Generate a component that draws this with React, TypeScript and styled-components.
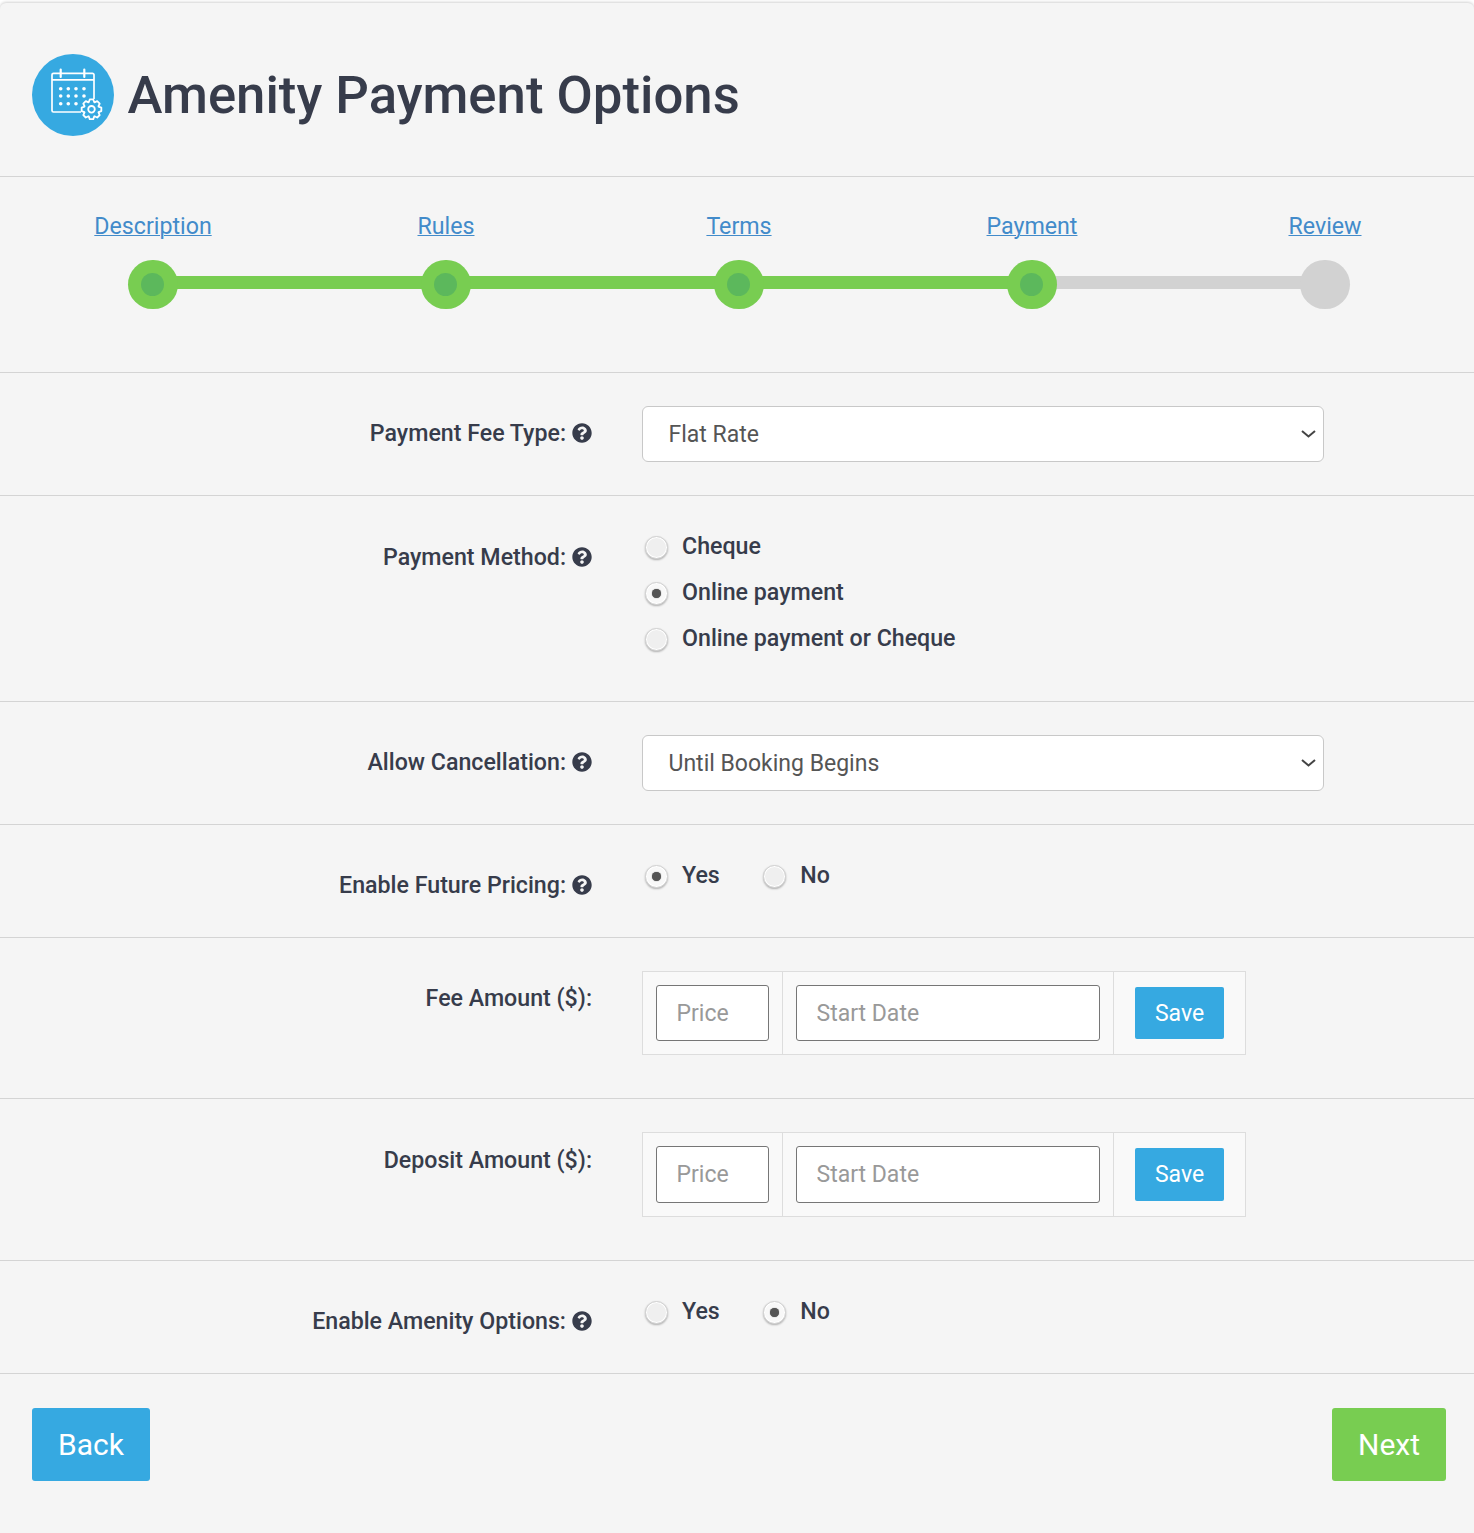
import React from 'react';
import styled, { createGlobalStyle } from 'styled-components';
import { FaQuestionCircle } from 'react-icons/fa';

const GlobalStyle = createGlobalStyle`
  html, body {
    margin: 0;
    padding: 0;
    background: #ffffff;
    font-family: Roboto, "Liberation Sans", sans-serif;
    color: #373c4b;
  }
`;

const Card = styled.div`
  margin-top: 3px;
  height: 1530px;
  box-sizing: border-box;
  background: #f5f5f5;
  border-radius: 6px 6px 0 0;
  box-shadow: 0 -1px 3px rgba(0, 0, 0, 0.18);
  overflow: hidden;
`;

const Header = styled.header`
  display: flex;
  align-items: center;
  gap: 13.5px;
  height: 174px;
  box-sizing: border-box;
  padding: 10px 32px 0;
  border-bottom: 1px solid #d4d4d4;
`;

const IconCircle = styled.div`
  width: 82px;
  height: 82px;
  border-radius: 50%;
  background: #36a9e1;
  flex-shrink: 0;
  svg {
    display: block;
  }
`;

const Title = styled.h1`
  margin: 0;
  font-size: 52.7px;
  font-weight: 500;
  color: #373c4b;
  white-space: nowrap;
`;

const Steps = styled.nav`
  height: 196px;
  box-sizing: border-box;
  padding-top: 34px;
  border-bottom: 1px solid #d4d4d4;
`;

const StepLabels = styled.div`
  display: grid;
  grid-template-columns: repeat(5, 293px);
  padding-left: 6.5px;
  margin-bottom: 18.75px;
`;

const StepCell = styled.div`
  text-align: center;
`;

const StepLink = styled.a`
  font-size: 23.2px;
  line-height: 30px;
  color: #428bca;
  text-decoration: underline;
  text-decoration-thickness: 1px;
`;

const Track = styled.div`
  display: flex;
  align-items: center;
  padding-left: 130px;
`;

const Node = styled.span<{ $done: boolean }>`
  width: 49.5px;
  height: 49.5px;
  border-radius: 50%;
  background: ${({ $done }) => ($done ? '#78cd51' : '#d2d2d2')};
  display: flex;
  align-items: center;
  justify-content: center;
  flex-shrink: 0;
  margin: 0 -2px;
  position: relative;
  &::after {
    content: '';
    display: ${({ $done }) => ($done ? 'block' : 'none')};
    width: 23px;
    height: 23px;
    border-radius: 50%;
    background: #5cb85c;
  }
`;

const Connector = styled.span<{ $done: boolean }>`
  width: 247.5px;
  height: 13px;
  margin-top: -4px;
  background: ${({ $done }) => ($done ? '#78cd51' : '#d2d2d2')};
  flex-shrink: 0;
`;

const Row = styled.section<{ $height: number; $last?: boolean }>`
  display: grid;
  grid-template-columns: 592px 1fr;
  column-gap: 50px;
  height: ${({ $height }) => $height}px;
  box-sizing: border-box;
  padding-top: 33px;
  border-bottom: ${({ $last }) => ($last ? 'none' : '1px solid #d4d4d4')};
`;

const Label = styled.label<{ $top: number }>`
  display: flex;
  justify-content: flex-end;
  align-items: center;
  gap: 6px;
  height: 24px;
  margin-top: ${({ $top }) => $top}px;
  font-size: 23.2px;
  font-weight: 500;
  color: #373c4b;
  white-space: nowrap;
  svg {
    width: 20px;
    height: 20px;
    flex-shrink: 0;
  }
`;

const SelectWrap = styled.div`
  position: relative;
  width: 682px;
  height: 56px;
  svg {
    position: absolute;
    top: 24px;
    right: 8px;
    pointer-events: none;
  }
`;

const Select = styled.select`
  display: block;
  width: 100%;
  height: 100%;
  box-sizing: border-box;
  padding: 0 25.5px;
  appearance: none;
  background: #ffffff;
  border: 1px solid #c8c8c8;
  border-radius: 6px;
  font-family: inherit;
  font-size: 23px;
  color: #555555;
`;

const RadioStack = styled.div`
  display: flex;
  flex-direction: column;
  gap: 16px;
  margin-top: 2px;
  padding-left: 3px;
`;

const RadioInline = styled.div`
  display: flex;
  gap: 43.5px;
  margin-top: 2px;
  padding-left: 3px;
`;

const RadioOption = styled.div`
  display: flex;
  align-items: center;
  gap: 14px;
  height: 30px;
  font-size: 23.2px;
  font-weight: 500;
  color: #373c4b;
  white-space: nowrap;
`;

const RadioDot = styled.span<{ $on: boolean }>`
  width: 23px;
  height: 23px;
  margin-top: 3px;
  box-sizing: border-box;
  border-radius: 50%;
  border: 1px solid #d2d2d2;
  background: ${({ $on }) => ($on ? '#f8f8f8' : '#efefef')};
  box-shadow: 0 1px 2px rgba(0, 0, 0, 0.28), inset 0 0 0 1px #fff;
  display: flex;
  align-items: center;
  justify-content: center;
  &::after {
    content: '';
    display: ${({ $on }) => ($on ? 'block' : 'none')};
    width: 9px;
    height: 9px;
    border-radius: 50%;
    background: #555555;
    box-shadow: 0 0 1px #555555;
  }
`;

const PriceGroup = styled.div<{ $height: number }>`
  display: flex;
  width: 604px;
  height: ${({ $height }) => $height}px;
  box-sizing: border-box;
  background: #f9f9f9;
  border: 1px solid #dddddd;
`;

const PriceCell = styled.div<{ $width: number }>`
  width: ${({ $width }) => $width}px;
  box-sizing: border-box;
  padding: 13px;
  display: flex;
  align-items: stretch;
  justify-content: center;
  flex-shrink: 0;
  & + & {
    border-left: 1px solid #dddddd;
  }
`;

const TextInput = styled.input`
  width: 100%;
  box-sizing: border-box;
  padding: 0 19.5px;
  background: #ffffff;
  border: 1px solid #767676;
  border-radius: 3px;
  font-family: inherit;
  font-size: 23px;
  &::placeholder {
    color: #999999;
    opacity: 1;
  }
`;

const SaveButton = styled.button`
  width: 89px;
  margin: 2px 0;
  border: none;
  border-radius: 2px;
  background: #36a9e1;
  color: #ffffff;
  font-family: inherit;
  font-size: 23px;
`;

const Footer = styled.footer`
  display: flex;
  justify-content: space-between;
  padding: 34px 28px 0 32px;
  border-top: 1px solid #d4d4d4;
`;

const NavButton = styled.button<{ $color: string; $width: number }>`
  width: ${({ $width }) => $width}px;
  height: 73px;
  border: none;
  border-radius: 3px;
  background: ${({ $color }) => $color};
  color: #ffffff;
  font-family: inherit;
  font-size: 30px;
`;

// eight rounded lobes round the centre, same look as the calendar's gear badge
const gearPath = (cx: number, cy: number, outer: number, inner: number) => {
  const teeth = 8;
  const pts: string[] = [];
  for (let i = 0; i < teeth; i++) {
    const a = (i / teeth) * Math.PI * 2 - Math.PI / 2;
    const w = Math.PI / teeth;
    [
      [a - w * 0.95, inner],
      [a - w * 0.45, outer],
      [a + w * 0.45, outer],
      [a + w * 0.95, inner],
    ].forEach(([ang, r]) => {
      pts.push(`${(cx + Math.cos(ang) * r).toFixed(2)} ${(cy + Math.sin(ang) * r).toFixed(2)}`);
    });
  }
  return `M${pts.join('L')}Z`;
};

const CalendarGearIcon = () => (
  <svg width="82" height="82" viewBox="0 0 82 82" fill="none" stroke="#fff" strokeWidth="1.7">
    <path d="M49 58H21.500A1.500 1.500 0 0 1 20 56.500V20.800a1.500 1.500 0 0 1 1.500-1.500h39a1.500 1.500 0 0 1 1.500 1.500V45" />
    <path d="M20 25.800h42" />
    <path d="M28.700 15.500v7.500M52.300 15.500v7.500" strokeWidth="2.200" strokeLinecap="round" />
    <g fill="#fff" stroke="none">
      {[34.700, 42, 49.700].map(y =>
        [28.700, 36.300, 44, 52].map(x =>
          y === 49.700 && x === 52 ? null : <circle key={`${x}-${y}`} cx={x} cy={y} r="1.800" />,
        ),
      )}
    </g>
    <path d={gearPath(59.500, 55.300, 10, 7.600)} strokeLinejoin="round" strokeWidth="1.800" />
    <circle cx="59.500" cy="55.300" r="3.300" strokeWidth="1.800" />
  </svg>
);

const ChevronIcon = () => (
  <svg width="15" height="8" viewBox="0 0 15 8" fill="none" stroke="#444" strokeWidth="2">
    <path d="M1 1l6.500 5.500L14 1" />
  </svg>
);

const HelpIcon = () => <FaQuestionCircle color="#373c4b" />;

const stepNames = ['Description', 'Rules', 'Terms', 'Payment', 'Review'];

interface RadioProps {
  label: string;
  on?: boolean;
}

const Radio: React.FC<RadioProps> = ({ label, on = false }) => (
  <RadioOption>
    <RadioDot $on={on} />
    {label}
  </RadioOption>
);

interface PriceRowProps {
  label: string;
  height: number;
  groupHeight: number;
  labelTop: number;
}

const PriceRow: React.FC<PriceRowProps> = ({ label, height, groupHeight, labelTop }) => (
  <Row $height={height}>
    <Label $top={labelTop}>{label}</Label>
    <PriceGroup $height={groupHeight}>
      <PriceCell $width={139}>
        <TextInput placeholder="Price" />
      </PriceCell>
      <PriceCell $width={331}>
        <TextInput placeholder="Start Date" />
      </PriceCell>
      <PriceCell $width={132}>
        <SaveButton>Save</SaveButton>
      </PriceCell>
    </PriceGroup>
  </Row>
);

const SelectField: React.FC<{ value: string }> = ({ value }) => (
  <SelectWrap>
    <Select defaultValue={value}>
      <option value={value}>{value}</option>
    </Select>
    <ChevronIcon />
  </SelectWrap>
);

export default function App() {
  return (
    <>
      <GlobalStyle />
      <Card>
        <Header>
          <IconCircle>
            <CalendarGearIcon />
          </IconCircle>
          <Title>Amenity Payment Options</Title>
        </Header>

        <Steps>
          <StepLabels>
            {stepNames.map(name => (
              <StepCell key={name}>
                <StepLink href="#">{name}</StepLink>
              </StepCell>
            ))}
          </StepLabels>
          <Track>
            {stepNames.map((name, i) => (
              <React.Fragment key={name}>
                <Node $done={i < 4} />
                {i < 4 && <Connector $done={i < 3} />}
              </React.Fragment>
            ))}
          </Track>
        </Steps>

        <Row $height={123}>
          <Label $top={15}>
            Payment Fee Type: <HelpIcon />
          </Label>
          <SelectField value="Flat Rate" />
        </Row>

        <Row $height={206}>
          <Label $top={16}>
            Payment Method: <HelpIcon />
          </Label>
          <RadioStack>
            <Radio label="Cheque" />
            <Radio label="Online payment" on />
            <Radio label="Online payment or Cheque" />
          </RadioStack>
        </Row>

        <Row $height={123}>
          <Label $top={15}>
            Allow Cancellation: <HelpIcon />
          </Label>
          <SelectField value="Until Booking Begins" />
        </Row>

        <Row $height={113}>
          <Label $top={15}>
            Enable Future Pricing: <HelpIcon />
          </Label>
          <RadioInline>
            <Radio label="Yes" on />
            <Radio label="No" />
          </RadioInline>
        </Row>

        <PriceRow label="Fee Amount ($):" height={161} groupHeight={84} labelTop={15} />
        <PriceRow label="Deposit Amount ($):" height={162} groupHeight={85} labelTop={16} />

        <Row $height={112} $last>
          <Label $top={15}>
            Enable Amenity Options: <HelpIcon />
          </Label>
          <RadioInline>
            <Radio label="Yes" />
            <Radio label="No" on />
          </RadioInline>
        </Row>

        <Footer>
          <NavButton $color="#36a9e1" $width={118}>Back</NavButton>
          <NavButton $color="#78cd51" $width={114}>Next</NavButton>
        </Footer>
      </Card>
    </>
  );
}
